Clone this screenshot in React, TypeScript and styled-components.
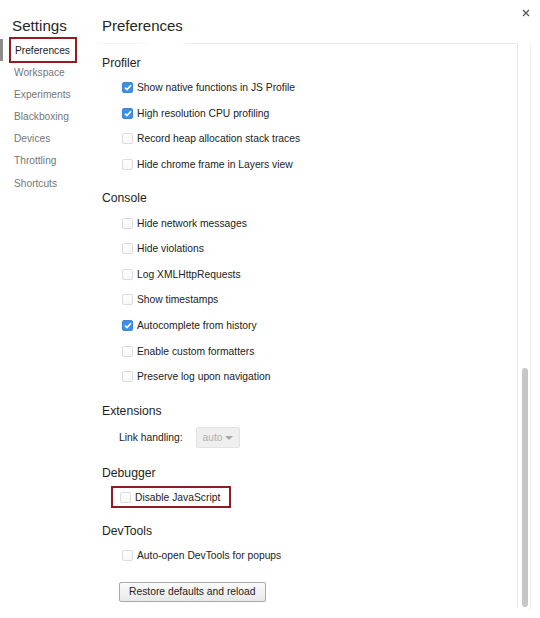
import React from "react";
import styled, { createGlobalStyle, css } from "styled-components";

const Global = createGlobalStyle`
  html, body { margin: 0; padding: 0; background: #fff; }
  body { font-family: "Liberation Sans", Arial, Helvetica, sans-serif; }
  * { box-sizing: border-box; }
`;

const Frame = styled.div`
  display: flex;
  width: 540px;
  height: 618px;
  background: #fff;
  overflow: hidden;
`;

const Sidebar = styled.nav`
  width: 90px;
  flex: none;
  display: flex;
  flex-direction: column;
`;

const Title = styled.h1`
  margin: 0;
  height: 39px;
  padding: 17px 0 0 12px;
  font-size: 15.2px;
  line-height: 18px;
  font-weight: normal;
  color: #262626;
`;

const NavItem = styled.div<{ $selected?: boolean }>`
  height: 22.17px;
  display: flex;
  align-items: center;
  padding-left: 14px;
  font-size: 10.2px;
  color: #767676;
  ${(p) =>
    p.$selected &&
    css`
      color: #222;
      box-shadow: inset 3px 0 0 #8c8c8c;
    `}
`;

const NavMark = styled.span`
  display: inline-flex;
  align-items: center;
  height: 26px;
  margin-left: -5px;
  padding: 0 5px 0 4px;
  border: 2px solid #951d22;
`;

const Main = styled.main`
  flex: 1;
  display: flex;
  flex-direction: column;
  position: relative;
`;

const Header = styled.header`
  height: 43px;
  padding: 17px 0 0 12px;
  font-size: 15px;
  line-height: 18px;
  color: #262626;
`;

const Close = styled.button`
  position: absolute;
  top: 8px;
  right: 10px;
  width: 9px;
  height: 9px;
  padding: 0;
  border: 0;
  background: none;
  display: flex;
  align-items: center;
  justify-content: center;
`;

const Body = styled.div`
  flex: 1;
  display: flex;
`;

const Pane = styled.div`
  flex: 1;
  margin-bottom: 10px;
  padding: 12px 0 0 12px;
  border-right: 1px solid #e8e8e8;
  background: linear-gradient(
      to right,
      rgba(236, 236, 236, 0) 0%,
      #f1f1f1 4%,
      #f4f4f4 12%,
      rgba(240, 240, 240, 0) 14%,
      rgba(240, 240, 240, 0) 21%,
      #e9e9e9 24%,
      #e9e9e9 100%
    )
    top left / 100% 1px no-repeat;
  display: flex;
  flex-direction: column;
`;

const Track = styled.div`
  width: 13px;
  flex: none;
  padding-left: 4px;
  border-right: 1px solid #f1f1f1;
  margin-bottom: 8px;
`;

const Thumb = styled.div`
  width: 6px;
  height: 239px;
  margin-top: 325px;
  border-radius: 3px;
  background: #c6c6c6;
`;

const Gutter = styled.div`
  width: 9px;
  flex: none;
`;

const Section = styled.section`
  display: flex;
  flex-direction: column;
  & + & {
    margin-top: 13px;
  }
`;

const Heading = styled.h2`
  margin: 0 0 4px;
  font-size: 12.2px;
  line-height: 16px;
  font-weight: normal;
  color: #1e1e1e;
`;

const Row = styled.label`
  height: 25.6px;
  display: flex;
  align-items: center;
  padding-left: 20px;
  font-size: 10.3px;
  color: #222;
`;

const Mark = styled.span`
  display: inline-flex;
  align-items: center;
  height: 22px;
  margin-left: -11px;
  padding: 0 9px 0 7px;
  border: 2px solid #8f1c20;
`;

const Box = styled.span<{ $on?: boolean }>`
  width: 11px;
  height: 11px;
  flex: none;
  margin-right: 4px;
  border-radius: 2px;
  display: inline-flex;
  align-items: center;
  justify-content: center;
  ${(p) =>
    p.$on
      ? css`
          background: #3f8fe6;
          border: 1px solid #3a86d9;
        `
      : css`
          background: linear-gradient(#fff, #f7f7f7);
          border: 1px solid #dcdcdc;
        `}
`;

const LinkRow = styled.div`
  height: 28px;
  margin-top: 1px;
  display: flex;
  align-items: center;
  padding-left: 17px;
  font-size: 10.3px;
  color: #222;
  gap: 13px;
`;

const Select = styled.div`
  width: 44px;
  height: 21px;
  display: flex;
  align-items: center;
  justify-content: space-between;
  padding: 0 6px 0 6px;
  border: 1px solid #e2e2e2;
  border-radius: 2px;
  background: #efefef;
  color: #b0b0b0;
  font-size: 10.3px;
`;

const Caret = styled.span`
  width: 0;
  height: 0;
  border-left: 4px solid transparent;
  border-right: 4px solid transparent;
  border-top: 4px solid #a9a9a9;
`;

const Button = styled.button`
  align-self: flex-start;
  margin: 13px 0 0 17px;
  height: 20px;
  padding: 0 9px;
  border: 1px solid #a9a9a9;
  border-radius: 2px;
  background: linear-gradient(#fbfbfb, #e8e8e8);
  font-family: inherit;
  font-size: 10.3px;
  color: #222;
`;

const Check = () => (
  <svg width="8" height="7" viewBox="0 0 8 7">
    <path d="M1 3.6 L3 5.6 L7 1.2" fill="none" stroke="#fff" strokeWidth="1.6" />
  </svg>
);

type Opt = { label: string; on?: boolean; marked?: boolean };

const CheckRow = ({ label, on, marked }: Opt) => {
  const inner = (
    <>
      <Box $on={on}>{on && <Check />}</Box>
      {label}
    </>
  );
  return <Row>{marked ? <Mark>{inner}</Mark> : inner}</Row>;
};

const profiler: Opt[] = [
  { label: "Show native functions in JS Profile", on: true },
  { label: "High resolution CPU profiling", on: true },
  { label: "Record heap allocation stack traces" },
  { label: "Hide chrome frame in Layers view" },
];

const consoleOpts: Opt[] = [
  { label: "Hide network messages" },
  { label: "Hide violations" },
  { label: "Log XMLHttpRequests" },
  { label: "Show timestamps" },
  { label: "Autocomplete from history", on: true },
  { label: "Enable custom formatters" },
  { label: "Preserve log upon navigation" },
];

const nav = ["Preferences", "Workspace", "Experiments", "Blackboxing", "Devices", "Throttling", "Shortcuts"];

export default function App() {
  return (
    <>
      <Global />
      <Frame>
        <Sidebar>
          <Title>Settings</Title>
          {nav.map((n, i) => (
            <NavItem key={n} $selected={i === 0}>
              {i === 0 ? <NavMark>{n}</NavMark> : n}
            </NavItem>
          ))}
        </Sidebar>
        <Main>
          <Header>Preferences</Header>
          <Close aria-label="Close">
            <svg width="8" height="8" viewBox="0 0 8 8">
              <path d="M1 1 L7 7 M7 1 L1 7" stroke="#555" strokeWidth="1.3" />
            </svg>
          </Close>
          <Body>
            <Pane>
              <Section>
                <Heading>Profiler</Heading>
                {profiler.map((o) => (
                  <CheckRow key={o.label} {...o} />
                ))}
              </Section>
              <Section>
                <Heading>Console</Heading>
                {consoleOpts.map((o) => (
                  <CheckRow key={o.label} {...o} />
                ))}
              </Section>
              <Section>
                <Heading>Extensions</Heading>
                <LinkRow>
                  Link handling:
                  <Select>
                    auto
                    <Caret />
                  </Select>
                </LinkRow>
              </Section>
              <Section>
                <Heading>Debugger</Heading>
                <CheckRow label="Disable JavaScript" marked />
              </Section>
              <Section>
                <Heading>DevTools</Heading>
                <CheckRow label="Auto-open DevTools for popups" />
                <Button>Restore defaults and reload</Button>
              </Section>
            </Pane>
            <Track>
              <Thumb />
            </Track>
            <Gutter />
          </Body>
        </Main>
      </Frame>
    </>
  );
}
